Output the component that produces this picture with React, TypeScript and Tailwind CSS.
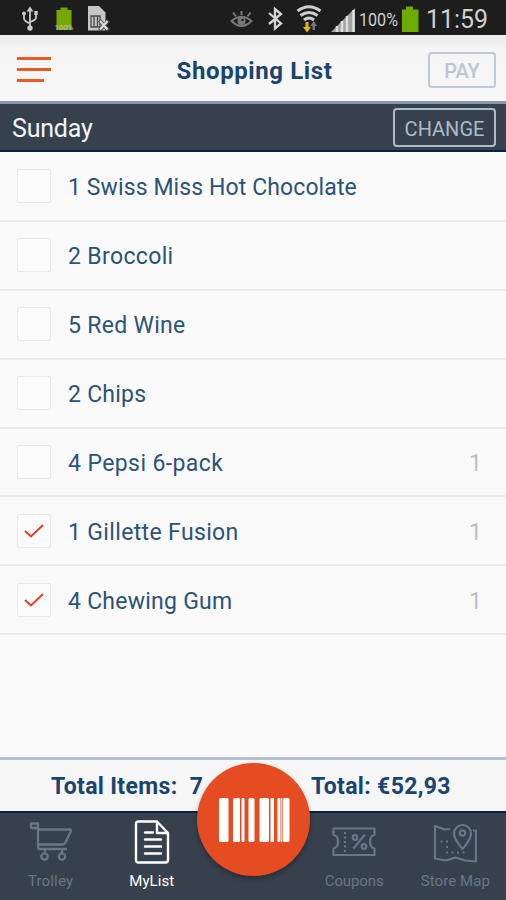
import { useState } from "react";

const initialItems = [
  { id: 1, label: "1 Swiss Miss Hot Chocolate", tracking: "tracking-[0.1px]", count: null, checked: false },
  { id: 2, label: "2 Broccoli", tracking: "tracking-[0.35px]", count: null, checked: false },
  { id: 3, label: "5 Red Wine", tracking: "tracking-[0.3px]", count: null, checked: false },
  { id: 4, label: "2 Chips", tracking: "tracking-[0.25px]", count: null, checked: false },
  { id: 5, label: "4 Pepsi 6-pack", tracking: "tracking-[0.4px]", count: 1, checked: false },
  { id: 6, label: "1 Gillette Fusion", tracking: "tracking-[0.35px]", count: 1, checked: true },
  { id: 7, label: "4 Chewing Gum", tracking: "tracking-[0.25px]", count: 1, checked: true },
];

function StatusIcons() {
  return (
    <svg width="506" height="35" viewBox="0 0 506 35" fill="none">
      {/* usb */}
      <g stroke="#c9c9c9" strokeWidth="1.8">
        <path d="M30 10V28M24 14v4.500q0 2.500 6 5M36 13v4.500q0 2.500-6 4.500" />
      </g>
      <path d="M30 6.500l3.500 5h-7z" fill="#c9c9c9" />
      <circle cx="30" cy="28" r="2.700" fill="#c9c9c9" />
      <circle cx="24" cy="13.500" r="2" fill="#c9c9c9" />
      <path d="M34.300 11h3.400v4h-3.400z" fill="#c9c9c9" />
      {/* battery with level */}
      <path d="M60.500 7.500h7V10h4v20H56.500V10h4z" fill="#76a900" />
      <text x="64" y="29.500" textAnchor="middle" fontSize="8" fontWeight="500" textLength="19" fontFamily="Roboto, sans-serif" fill="#b4bfa0">100%</text>
      {/* sim card */}
      <path d="M88 6h11l6.500 6.500V30.500H88z" fill="#c6c6c6" />
      <path d="M91 16h9v11H91zM94 16v11M97.500 16v11" stroke="#4a4a4a" strokeWidth="1.300" />
      <path d="M99.500 20.500l9 10M108.500 20.500l-9 10" stroke="#4a4a4a" strokeWidth="4" />
      <path d="M100 21l7.500 8.500M107.500 21l-7.500 8.500" stroke="#d8d8d8" strokeWidth="2.300" />
      {/* eye */}
      <g stroke="#787878" strokeWidth="2">
        <path d="M231.500 21q10-8.500 20 0q-10 10-20 0zM233 12.500l3 4M241.500 11v4M250.500 12.500l-3 4" />
        <circle cx="241.500" cy="21" r="3" fill="#787878" />
      </g>
      <circle cx="242.500" cy="20" r="1.300" fill="#222" />
      {/* bluetooth */}
      <path d="M269 13l12 10.500-6 5V9l6 5-12 10" stroke="#d4d4d4" strokeWidth="2.300" />
      {/* wifi */}
      <g stroke="#cfcfcf" strokeWidth="3">
        <path d="M297.500 11q11.500-8.500 23 0M300.500 15.500q8.500-6 17 0M304 20q5-4 10 0" />
      </g>
      <path d="M305.500 22h3v5h2.500l-4 5.500-4-5.500h2.500z" fill="#e5b800" />
      <path d="M312.500 30h2.500v-4h2l-3.300-5-3.200 5h2z" fill="#777" />
      {/* signal */}
      <path d="M331 32L355 8v24z" fill="#a3a3a3" />
      <path d="M337 32v-6M342 32V21M347 32V16M353.500 32V10" stroke="#dedede" strokeWidth="2.500" />
      {/* battery */}
      <path d="M406 6.500h7V9.500h5.500V32H402V9.500h4z" fill="#6cab00" />
      <text x="359" y="25.500" fontSize="17.500" textLength="39" lengthAdjust="spacingAndGlyphs" fontFamily="Roboto, sans-serif" fill="#d0d0d0">100%</text>
      <text x="426" y="27.500" fontSize="26" textLength="62" lengthAdjust="spacingAndGlyphs" fontFamily="Roboto, sans-serif" fill="#d0d0d0">11:59</text>
    </svg>
  );
}

function TrolleyIcon() {
  return (
    <svg width="44" height="42" viewBox="0 0 44 42" fill="none" stroke="currentColor" strokeWidth="2.300" strokeLinejoin="round">
      <path d="M9 7V2.500H2v4.500h7V26q0 2 2 2H38M9 8.500h31.500q2 0 1.200 2L36.500 21.500q-1 2-3 2H9" />
      <circle cx="15.500" cy="35.500" r="3.200" />
      <circle cx="33" cy="35.500" r="3.200" />
      <path d="M16 28v4M33 28v4" />
    </svg>
  );
}

function ListIcon() {
  return (
    <svg width="36" height="44" viewBox="0 0 36 44" fill="none" stroke="currentColor" strokeWidth="2.400" strokeLinejoin="round" strokeLinecap="round">
      <path d="M4.500 1.500H23L34 13v27q0 2.500-2.500 2.500h-27Q2 42.500 2 40V4q0-2.500 2.500-2.500zM23 1.500V13h11" />
      <path d="M11 12.500h8M11 19.500h16M11 26.500h16M11 33.500h16" />
    </svg>
  );
}

function CouponIcon() {
  return (
    <svg width="44" height="42" viewBox="0 0 44 42" fill="none" stroke="currentColor" strokeWidth="2.200">
      <path d="M1.500 7.500h41v6.500q-4.500.5-4.500 6.500t4.500 7V34h-41v-6.500q4.500-1 4.500-7T1.500 14z" strokeLinejoin="round" />
      <path d="M13 11v20" strokeDasharray="2 2.500" />
      <circle cx="23" cy="16.500" r="2.300" />
      <circle cx="32" cy="25.500" r="2.300" />
      <path d="M33 13.500L21.500 27.500" />
    </svg>
  );
}

function MapIcon() {
  return (
    <svg width="44" height="42" viewBox="0 0 44 42" fill="none" stroke="currentColor" strokeWidth="2.200" strokeLinejoin="round">
      <path d="M17 8L12 8.500 2 5v32.500l11 2 9.500-3 9.500 3 11 1V9.500H40" />
      <path d="M29.500 28q-8.500-10-8.500-15.500a8.500 8.500 0 0 1 17 0q0 5.500-8.500 15.500z" />
      <circle cx="29.500" cy="12" r="2.700" />
      <path d="M7.500 20.500h2M13 20.500h2M13 26h2M13 31.500h2M18.500 31.500h2M24 31.500h2M29.500 31.500h2" />
    </svg>
  );
}

const tabs = [
  { name: "Trolley", icon: <TrolleyIcon />, style: "text-[#697685]", text: "tracking-[0.15px]" },
  { name: "MyList", icon: <ListIcon />, style: "text-white", text: "tracking-[0.1px]" },
  { name: "", icon: null, style: "", text: "" },
  { name: "Coupons", icon: <CouponIcon />, style: "text-[#697685]", text: "tracking-[-0.1px]" },
  { name: "Store Map", icon: <MapIcon />, style: "text-[#697685]", text: "tracking-[0.1px]" },
];

export default function App() {
  const [items, setItems] = useState(initialItems);

  const toggle = (id: number) => {
    setItems(items.map((item) => (item.id === id ? { ...item, checked: !item.checked } : item)));
  };

  return (
    <div className="flex h-[900px] w-[506px] flex-col overflow-hidden bg-[#fafafa] font-['Roboto',sans-serif] text-[#2c5378]">
      <div className="h-[35px] shrink-0 bg-[#1d1d1d]">
        <StatusIcons />
      </div>

      <header className="grid h-[69px] shrink-0 grid-cols-[1fr_auto_1fr] items-center border-b-[3px] border-[#8797a8] bg-linear-to-b from-[#e9e9e9] via-[#f5f5f5] via-20% to-[#f7f7f7] pr-[10px] pl-[17px]">
        <button className="mt-0.5 flex flex-col gap-2">
          <span className="h-[3px] w-[34px] bg-[#e85a28]" />
          <span className="h-[3px] w-[34px] bg-[#e85a28]" />
          <span className="h-[3px] w-[27px] bg-[#e85a28]" />
        </button>
        <h1 className="mr-1 pt-1.5 text-[24px] leading-none font-bold tracking-[0.6px] text-[#1a4470]">Shopping List</h1>
        <button className="mt-[3px] h-9 w-[68px] justify-self-end rounded-[4px] border-2 border-[#bfc8d6] pt-0.5 text-[20px] leading-none font-medium text-[#bcc5d2]">
          PAY
        </button>
      </header>

      <div className="flex h-12 shrink-0 items-center justify-between border-b-2 border-[#0c2142] bg-[#37414d] pr-[10px] pl-3">
        <span className="pt-0.5 text-[25px] leading-none tracking-[-0.2px] text-[#f0f5fa]">Sunday</span>
        <button className="h-[39px] w-[103px] rounded-[4px] border-2 border-[#aebacb] pt-1 text-[20px] leading-none text-[#aebacb]">
          CHANGE
        </button>
      </div>

      <ul className="flex-1 pt-px">
        {items.map((item) => (
          <li
            key={item.id}
            className="flex h-[68.900px] cursor-pointer items-center border-b-2 border-[#e8e9ea] pr-6 pl-[17px]"
            onClick={() => toggle(item.id)}
          >
            <span className="mr-[17px] flex size-[34px] items-center justify-center rounded-[2px] border-[1.500px] border-[#e6eaec] bg-[#fcfcfc]">
              {item.checked && (
                <svg width="20" height="16" viewBox="0 0 20 16" fill="none" stroke="#e83c24" strokeWidth="2">
                  <path d="M1 8l6 5.500L19 2" />
                </svg>
              )}
            </span>
            <span className={`pt-[3px] text-[23px] leading-none whitespace-nowrap ${item.tracking}`}>{item.label}</span>
            <span className="ml-auto pt-[3px] text-[23px] leading-none text-[#b5bfca]">{item.count}</span>
          </li>
        ))}
      </ul>

      <footer className="relative shrink-0">
        <div className="flex h-[56px] items-center border-t-[3px] border-b-2 border-t-[#b5c0d2] border-b-[#0c1c42] bg-[#f6f6f6] pt-px pl-[51px] text-[23px] leading-none font-bold text-[#1a4470]">
          <span className="w-[260px] tracking-[0.35px] whitespace-pre">Total Items:  7</span>
          <span className="tracking-[0.35px]">Total: €52,93</span>
        </div>
        <nav className="grid h-[87px] grid-cols-5 bg-[#37414d]">
          {tabs.map((tab, idx) => (
            <button key={idx} className={`flex flex-col items-center pt-[7px] ${tab.style}`}>
              <span className="flex h-[44px] items-center">{tab.icon}</span>
              <span className={`mt-[10px] text-[15px] leading-none whitespace-nowrap ${tab.text}`}>{tab.name}</span>
            </button>
          ))}
        </nav>
        {/* scan button */}
        <button className="absolute top-[6px] left-[197px] flex size-[113px] items-center justify-center rounded-full bg-[#e64c22] pl-px shadow-[0_3px_5px_rgba(0,0,0,0.3)]">
          <svg width="71" height="44" viewBox="0 0 71 44" fill="#fff">
            <rect x="0" width="9.500" height="44" rx="1.500" />
            <rect x="14" width="7" height="44" rx="1.500" />
            <rect x="22.500" width="3" height="44" rx="1" />
            <rect x="29.500" width="6" height="44" rx="1.500" />
            <rect x="40.500" width="9.500" height="44" rx="1.500" />
            <rect x="51.500" width="3.500" height="44" rx="1" />
            <rect x="58.500" width="3" height="44" rx="1" />
            <rect x="62" width="1.500" height="44" opacity="0.750" />
            <rect x="64" width="6.500" height="44" rx="1.500" />
          </svg>
        </button>
      </footer>
    </div>
  );
}
